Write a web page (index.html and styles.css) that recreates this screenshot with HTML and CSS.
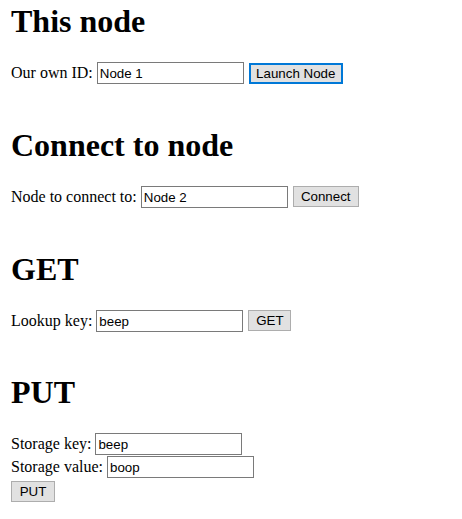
FILE: index.html
```html
<!DOCTYPE html>
<html>
<head>
<meta charset="utf-8">
<link rel="stylesheet" href="styles.css">
</head>
<body>
<main class="page">
  <section class="section">
    <h1 class="title">This node</h1>
    <div class="row">
      <span class="label">Our own ID:</span>
      <input class="field" type="text" value="Node 1">
      <button class="btn btn-focus btn-launch">Launch Node</button>
    </div>
  </section>
  <section class="section">
    <h1 class="title">Connect to node</h1>
    <div class="row">
      <span class="label">Node to connect to:</span>
      <input class="field" type="text" value="Node 2">
      <button class="btn btn-connect">Connect</button>
    </div>
  </section>
  <section class="section">
    <h1 class="title">GET</h1>
    <div class="row">
      <span class="label">Lookup key:</span>
      <input class="field" type="text" value="beep">
      <button class="btn btn-get">GET</button>
    </div>
  </section>
  <section class="section">
    <h1 class="title">PUT</h1>
    <div class="row">
      <span class="label">Storage key:</span>
      <input class="field" type="text" value="beep">
    </div>
    <div class="row">
      <span class="label">Storage value:</span>
      <input class="field" type="text" value="boop">
    </div>
    <div class="row">
      <button class="btn btn-put">PUT</button>
    </div>
  </section>
</main>
</body>
</html>
```

FILE: styles.css
```css
html, body {
  margin: 0;
  padding: 0;
  background: #ffffff;
}

body {
  font-family: "Liberation Serif", "Times New Roman", serif;
  font-size: 16px;
  color: #000000;
}

.page {
  padding: 3.2px 11px 0 11px;
  display: flex;
  flex-direction: column;
  gap: 42.3px;
}

.section {
  display: flex;
  flex-direction: column;
}

.title {
  margin: 0 0 21.44px 0;
  font-size: 32px;
  font-weight: bold;
  line-height: 37px;
}

.row {
  display: flex;
  align-items: center;
  gap: 4px;
  height: 23px;
  line-height: 18px;
}

.label {
  white-space: nowrap;
}

.field {
  box-sizing: border-box;
  width: 147px;
  height: 22px;
  margin: 0;
  padding: 1px 2px 0 2px;
  border: 1px solid #7a7a7a;
  border-radius: 0;
  background: #ffffff;
  font-family: "Liberation Sans", Arial, sans-serif;
  font-size: 13.33px;
  color: #000000;
  outline: none;
}

.btn {
  box-sizing: border-box;
  height: 21px;
  margin: 0 0 0 1px;
  padding: 0;
  border: 1px solid #adadad;
  border-radius: 0;
  background: #e1e1e1;
  font-family: "Liberation Sans", Arial, sans-serif;
  font-size: 13.33px;
  color: #000000;
  white-space: nowrap;
  text-align: center;
}

.btn-focus {
  border: 2px solid #0078d7;
  height: 21px;
}

.btn-launch {
  width: 94px;
}

.btn-connect {
  width: 66px;
}

.btn-get {
  width: 43px;
}

.btn-put {
  width: 44px;
  height: 21px;
  margin: 2px 0 0 0;
}
```
